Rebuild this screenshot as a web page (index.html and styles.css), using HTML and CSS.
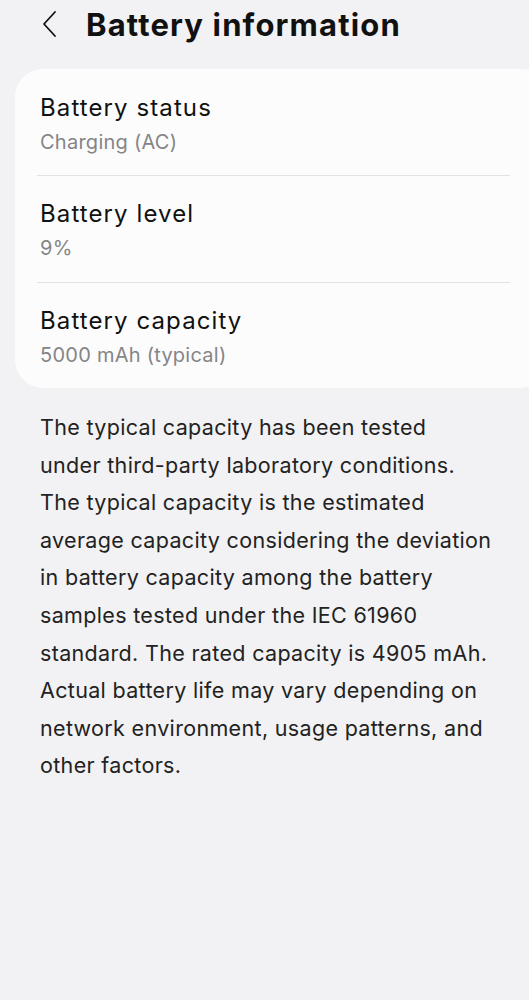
FILE: index.html
```html
<!DOCTYPE html>
<html>
<head>
<meta charset="utf-8">
<link rel="stylesheet" href="styles.css">
</head>
<body>
<header class="topbar">
  <svg class="back" width="20" height="30" viewBox="0 0 20 30"><path d="M15 3 L4 15 L15 27" fill="none" stroke="#111" stroke-width="1.8" stroke-linecap="round" stroke-linejoin="round"/></svg>
  <h1 class="title">Battery information</h1>
</header>
<section class="card">
  <div class="item">
    <div class="item-title">Battery status</div>
    <div class="item-sub">Charging (AC)</div>
  </div>
  <div class="divider"></div>
  <div class="item">
    <div class="item-title">Battery level</div>
    <div class="item-sub">9%</div>
  </div>
  <div class="divider"></div>
  <div class="item">
    <div class="item-title">Battery capacity</div>
    <div class="item-sub">5000 mAh (typical)</div>
  </div>
</section>
<p class="note">The typical capacity has been tested<br>under third-party laboratory conditions.<br>The typical capacity is the estimated<br>average capacity considering the deviation<br>in battery capacity among the battery<br>samples tested under the IEC 61960<br>standard. The rated capacity is 4905 mAh.<br>Actual battery life may vary depending on<br>network environment, usage patterns, and<br>other factors.</p>
</body>
</html>
```
FILE: styles.css
```css
html, body {
  margin: 0;
  padding: 0;
  background: #f2f2f4;
  font-family: Inter, "Noto Sans", sans-serif;
  color: #111;
}
.topbar {
  display: flex;
  align-items: center;
  height: 48px;
  padding-left: 40px;
  gap: 26px;
}
.back { display: block; }
.title {
  margin: 0;
  font-size: 31px;
  font-weight: 700;
  letter-spacing: 1.15px;
}
.card {
  margin: 21px -20px 0 15px;
  background: #fcfcfd;
  border-radius: 28px;
  padding: 0.5px 0 0 0;
}
.item {
  padding: 21px 0 0 25px;
  height: 105.5px;
  box-sizing: border-box;
  display: flex;
  flex-direction: column;
}
.item-title {
  font-size: 24px;
  line-height: 34px;
  letter-spacing: 1.1px;
}
.item-sub {
  font-size: 20px;
  line-height: 34px;
  color: #858587;
  letter-spacing: 0.25px;
}
.divider {
  height: 1px;
  background: #e2e2e4;
  margin: 0 39px 0 22px;
}
.note {
  margin: 21px 0 0 40px;
  font-size: 21.5px;
  line-height: 37.6px;
  color: #222;
  letter-spacing: 0.33px;
}
```
